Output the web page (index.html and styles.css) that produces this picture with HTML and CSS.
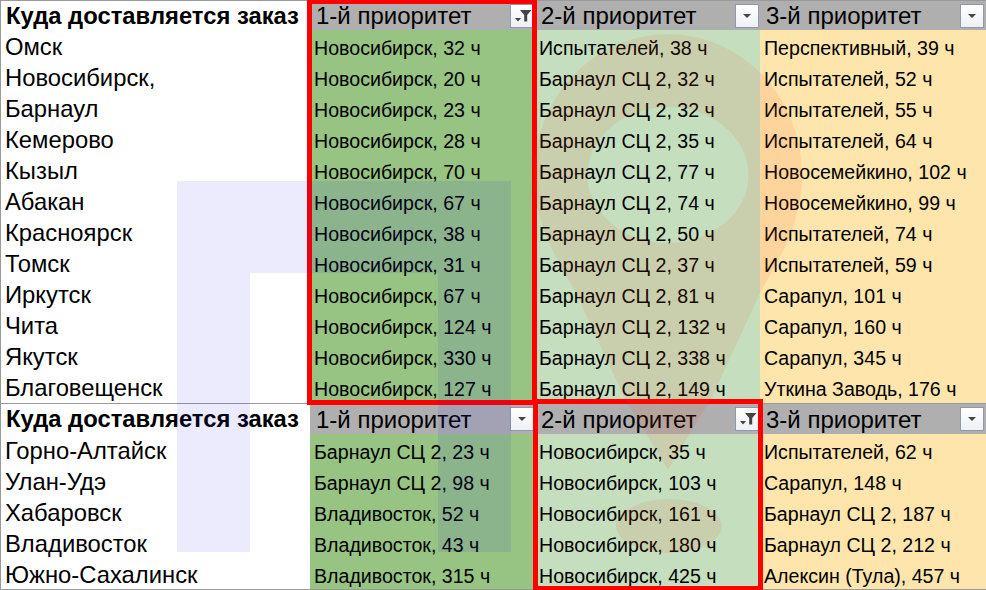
FILE: index.html
```html
<!DOCTYPE html>
<html lang="ru">
<head>
<meta charset="utf-8">
<title>Приоритеты доставки</title>
<link rel="stylesheet" href="styles.css">
</head>
<body>
<div class="sheet">
<table class="grid">
<colgroup><col class="c0"><col class="c1"><col class="c2"><col class="c3"></colgroup>
<tbody class="first">
<tr class="head"><th class="city">Куда доставляется заказ</th>
<th class="p"><div class="hc"><span>1-й приоритет</span><i class="btn"><svg viewBox="0 0 22 22"><path d="M9 5h11.500l-4.300 5v6.500h-3V10z"/><path d="M4 13h6l-3 3.500z"/></svg></i></div></th>
<th class="p"><div class="hc"><span>2-й приоритет</span><i class="btn"><svg viewBox="0 0 22 22"><path d="M7 9h8l-4 4z"/></svg></i></div></th>
<th class="p"><div class="hc"><span>3-й приоритет</span><i class="btn"><svg viewBox="0 0 22 22"><path d="M7 9h8l-4 4z"/></svg></i></div></th></tr>
<tr><td class="city">Омск</td><td class="a">Новосибирск, 32 ч</td><td class="b">Испытателей, 38 ч</td><td class="d">Перспективный, 39 ч</td></tr>
<tr><td class="city">Новосибирск,</td><td class="a">Новосибирск, 20 ч</td><td class="b">Барнаул СЦ 2, 32 ч</td><td class="d">Испытателей, 52 ч</td></tr>
<tr><td class="city">Барнаул</td><td class="a">Новосибирск, 23 ч</td><td class="b">Барнаул СЦ 2, 32 ч</td><td class="d">Испытателей, 55 ч</td></tr>
<tr><td class="city">Кемерово</td><td class="a">Новосибирск, 28 ч</td><td class="b">Барнаул СЦ 2, 35 ч</td><td class="d">Испытателей, 64 ч</td></tr>
<tr><td class="city">Кызыл</td><td class="a">Новосибирск, 70 ч</td><td class="b">Барнаул СЦ 2, 77 ч</td><td class="d">Новосемейкино, 102 ч</td></tr>
<tr><td class="city">Абакан</td><td class="a">Новосибирск, 67 ч</td><td class="b">Барнаул СЦ 2, 74 ч</td><td class="d">Новосемейкино, 99 ч</td></tr>
<tr><td class="city">Красноярск</td><td class="a">Новосибирск, 38 ч</td><td class="b">Барнаул СЦ 2, 50 ч</td><td class="d">Испытателей, 74 ч</td></tr>
<tr><td class="city">Томск</td><td class="a">Новосибирск, 31 ч</td><td class="b">Барнаул СЦ 2, 37 ч</td><td class="d">Испытателей, 59 ч</td></tr>
<tr><td class="city">Иркутск</td><td class="a">Новосибирск, 67 ч</td><td class="b">Барнаул СЦ 2, 81 ч</td><td class="d">Сарапул, 101 ч</td></tr>
<tr><td class="city">Чита</td><td class="a">Новосибирск, 124 ч</td><td class="b">Барнаул СЦ 2, 132 ч</td><td class="d">Сарапул, 160 ч</td></tr>
<tr><td class="city">Якутск</td><td class="a">Новосибирск, 330 ч</td><td class="b">Барнаул СЦ 2, 338 ч</td><td class="d">Сарапул, 345 ч</td></tr>
<tr class="last"><td class="city">Благовещенск</td><td class="a">Новосибирск, 127 ч</td><td class="b">Барнаул СЦ 2, 149 ч</td><td class="d">Уткина Заводь, 176 ч</td></tr>
</tbody>
<tbody class="second">
<tr class="head"><th class="city">Куда доставляется заказ</th>
<th class="p"><div class="hc"><span>1-й приоритет</span><i class="btn"><svg viewBox="0 0 22 22"><path d="M7 9h8l-4 4z"/></svg></i></div></th>
<th class="p"><div class="hc"><span>2-й приоритет</span><i class="btn"><svg viewBox="0 0 22 22"><path d="M9 5h11.500l-4.300 5v6.500h-3V10z"/><path d="M4 13h6l-3 3.500z"/></svg></i></div></th>
<th class="p"><div class="hc"><span>3-й приоритет</span><i class="btn"><svg viewBox="0 0 22 22"><path d="M7 9h8l-4 4z"/></svg></i></div></th></tr>
<tr><td class="city">Горно-Алтайск</td><td class="a">Барнаул СЦ 2, 23 ч</td><td class="b">Новосибирск, 35 ч</td><td class="d">Испытателей, 62 ч</td></tr>
<tr><td class="city">Улан-Удэ</td><td class="a">Барнаул СЦ 2, 98 ч</td><td class="b">Новосибирск, 103 ч</td><td class="d">Сарапул, 148 ч</td></tr>
<tr><td class="city">Хабаровск</td><td class="a">Владивосток, 52 ч</td><td class="b">Новосибирск, 161 ч</td><td class="d">Барнаул СЦ 2, 187 ч</td></tr>
<tr><td class="city">Владивосток</td><td class="a">Владивосток, 43 ч</td><td class="b">Новосибирск, 180 ч</td><td class="d">Барнаул СЦ 2, 212 ч</td></tr>
<tr><td class="city">Южно-Сахалинск</td><td class="a">Владивосток, 315 ч</td><td class="b">Новосибирск, 425 ч</td><td class="d">Алексин (Тула), 457 ч</td></tr>
</tbody>
</table>
<div class="box box-one"></div>
<div class="box box-two"></div>
<svg class="mark" viewBox="0 0 986 590" aria-hidden="true">
<path class="mark-blue" d="M177 181H511V552H438V273H250V552H177Z"/>
<path class="mark-red" fill-rule="evenodd" d="M668 34A134 141 0 0 1 802 175C802 205 792 235 780 257L760 293L712 397L668 470L624 397L576 293L556 257C544 235 534 205 534 175A134 141 0 0 1 668 34ZM668 107A80.500 68 0 1 0 668 243A80.500 68 0 1 0 668 107Z"/>
<ellipse class="mark-red" cx="669" cy="526" rx="53" ry="27"/>
</svg>
</div>
</body>
</html>
```
FILE: styles.css
```css
html, body { margin: 0; padding: 0; background: #fff; }
.sheet {
  position: relative;
  width: 986px;
  height: 590px;
  overflow: hidden;
  font-family: "Liberation Sans", Arial, sans-serif;
  color: #000;
}
.grid {
  width: 986px;
  border-collapse: separate;
  border-spacing: 0;
  table-layout: fixed;
  border-top: 1px solid #999;
  border-bottom: 1px solid #999;
}
.c0 { width: 310px; }
.c1 { width: 225px; }
.c2 { width: 225px; }
.c3 { width: 226px; }
tr { height: 31px; }
.first .last { height: 32px; }
th, td { padding: 0; font-weight: normal; text-align: left; white-space: nowrap; overflow: hidden; line-height: 1; }
.city { font-size: 23.800px; padding: 2px 0 0 4px; border-left: 1px solid #999; }
th.city { font-weight: bold; padding: 0 0 0 5px; font-size: 23.800px; }
td.a, td.b, td.d { font-size: 19.600px; padding: 6px 0 0 4px; }
.first .last td { padding-bottom: 1px; }
td.a { background: #97c383; }
td.b { background: #c5dfbe; }
td.d { background: #fee5ac; }
.head { height: 29px; }
.head th.p { background: #afafaf; font-size: 24px; }
.second .head { height: 31px; }
.second .head th { border-top: 1px solid #999; }
.second .hc span { padding-top: 2px; }
.hc { display: flex; align-items: center; justify-content: space-between; padding: 0 1px 0 6px; }
th:last-child .hc { padding-right: 2px; }
.btn {
  display: block;
  width: 24px;
  height: 24px;
  box-sizing: border-box;
  background: linear-gradient(#fff, #eef0f4);
  border: 1px solid #8e99ad;
}
.btn svg { display: block; width: 22px; height: 22px; fill: #444; }
.box { position: absolute; border: solid #f00; border-width: 5px; box-sizing: border-box; pointer-events: none; }
.box-one { left: 307px; top: 0; width: 230px; height: 405px; border-top-width: 4px; }
.box-two { left: 533px; top: 399px; width: 230px; height: 191px; border-bottom-width: 4px; }
.mark { position: absolute; left: 0; top: 0; width: 986px; height: 590px; pointer-events: none; }
.mark-blue { fill: rgba(30, 30, 230, .09); }
.mark-red { fill: rgba(240, 80, 30, .11); }
```
